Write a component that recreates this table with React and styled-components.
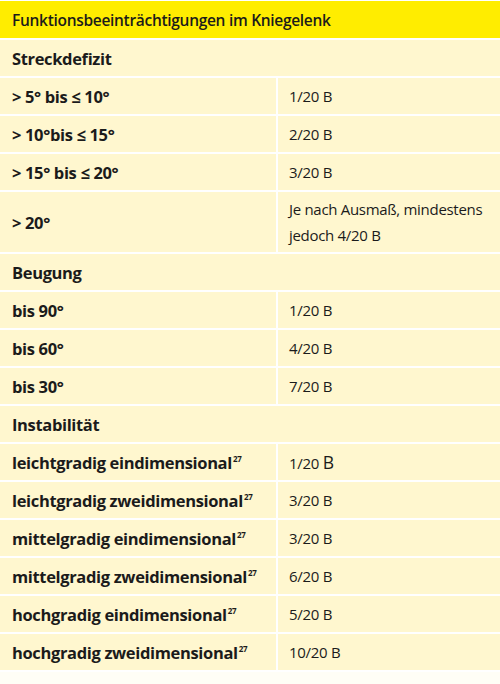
import React from "react";
import styled, { createGlobalStyle } from "styled-components";

const Global = createGlobalStyle`
  html, body {
    margin: 0;
    padding: 0;
    background: #fffef6;
  }
  body {
    font-family: "Open Sans", "Noto Sans", sans-serif;
    color: #1b1b1b;
  }
`;

const rows = [
  { section: "Streckdefizit" },
  { label: "> 5° bis ≤ 10°", value: "1/20 B" },
  { label: "> 10°bis ≤ 15°", value: "2/20 B" },
  { label: "> 15° bis ≤ 20°", value: "3/20 B" },
  { label: "> 20°", value: "Je nach Ausmaß, mindestens jedoch 4/20 B", tall: true },
  { section: "Beugung" },
  { label: "bis 90°", value: "1/20 B" },
  { label: "bis 60°", value: "4/20 B" },
  { label: "bis 30°", value: "7/20 B" },
  { section: "Instabilität" },
  { label: "leichtgradig eindimensional", sup: "27", value: "1/20", big: "B" },
  { label: "leichtgradig zweidimensional", sup: "27", value: "3/20 B" },
  { label: "mittelgradig eindimensional", sup: "27", value: "3/20 B" },
  { label: "mittelgradig zweidimensional", sup: "27", value: "6/20 B" },
  { label: "hochgradig eindimensional", sup: "27", value: "5/20 B" },
  { label: "hochgradig zweidimensional", sup: "27", value: "10/20 B" },
];

const App = () => {
  return (
    <>
      <Global />
      <Table>
        <Header>Funktionsbeeinträchtigungen im Kniegelenk</Header>
        {rows.map((row, i) =>
          row.section ? (
            <Section key={i}>{row.section}</Section>
          ) : (
            <React.Fragment key={i}>
              <Label tall={row.tall}>
                <span>
                  {row.label}
                  {row.sup && <Sup>{row.sup}</Sup>}
                </span>
              </Label>
              <Value tall={row.tall}>
                <span>
                  {row.value}
                  {row.big && " "}
                  {row.big && <Big>{row.big}</Big>}
                </span>
              </Value>
            </React.Fragment>
          )
        )}
      </Table>
    </>
  );
};

const Table = styled.div`
  display: grid;
  grid-template-columns: 276px 1fr;
  column-gap: 2px;
  row-gap: 2px;
  width: 500px;
  padding: 1px 0 2px;
  background: #ffffff;
`;

const Header = styled.div`
  grid-column: 1 / -1;
  height: 37px;
  display: flex;
  align-items: center;
  padding: 0 12px;
  background: #ffed00;
  font-weight: 600;
  font-size: 15.5px;
  letter-spacing: -0.3px;
`;

const Cell = styled.div`
  height: ${({ tall }) => (tall ? "60px" : "36px")};
  display: flex;
  align-items: center;
  background: #fff7cf;
  box-sizing: border-box;
`;

const Section = styled(Cell)`
  grid-column: 1 / -1;
  padding: 0 12px;
  font-weight: 700;
  font-size: 16.5px;
  letter-spacing: -0.35px;
`;

const Label = styled(Cell)`
  padding: 0 12px;
  font-weight: 700;
  font-size: 16.5px;
  letter-spacing: -0.35px;
  white-space: nowrap;
`;

const Sup = styled.sup`
  font-size: 8px;
  letter-spacing: -0.3px;
  margin-left: 1px;
  vertical-align: 7px;
`;

const Value = styled(Cell)`
  padding: 0 11px;
  font-size: 15px;
  line-height: 26px;
  letter-spacing: -0.3px;
`;

const Big = styled.span`
  font-size: 17.5px;
`;

export default App;
